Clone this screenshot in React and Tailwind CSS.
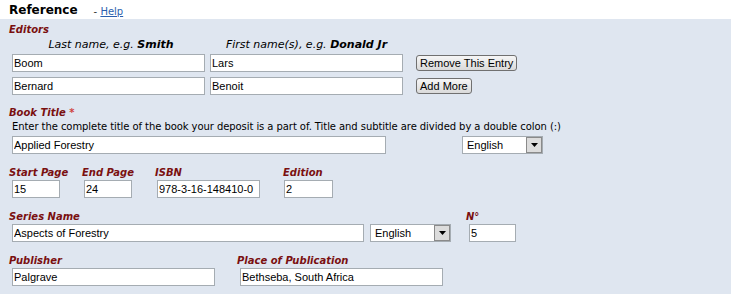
import React from "react";

const label = "font-['DejaVu_Sans',sans-serif] text-[10px] leading-[12px] font-bold italic text-[#7a1010]";
const field =
  "block h-[18px] border border-[#a5acb2] bg-white px-[1px] font-['Liberation_Sans',Arial,sans-serif] text-[11px] leading-[16px] text-black outline-none";

const Field = ({ value, w }) => (
  <input readOnly value={value} className={field} style={{ width: w }} />
);

const Select = ({ w }) => (
  <div
    className="flex h-[18px] items-stretch border border-[#a5acb2] bg-white"
    style={{ width: w }}
  >
    <span className="flex-1 pl-[4px] font-['Liberation_Sans',Arial,sans-serif] text-[11px] leading-[16px] text-black">
      English
    </span>
    <span className="flex w-[16px] items-center justify-center border border-[#8a8a8a] bg-[#dcdcdc]">
      <svg width="7" height="4" viewBox="0 0 7 4">
        <path d="M0 0h7L3.5 4z" fill="#000" />
      </svg>
    </span>
  </div>
);

const Button = ({ children }) => (
  <button className="ml-[8px] block h-[16px] rounded-[3px] border border-[#707070] bg-gradient-to-b from-[#f6f6f6] to-[#dadada] px-[3px] font-['Liberation_Sans',Arial,sans-serif] text-[11px] leading-[14px] text-black">
    {children}
  </button>
);

const App = () => {
  return (
    <div className="h-[294px] w-[731px] overflow-hidden bg-white">
      <div className="flex h-[19px] items-end pb-[1px] pl-[9px]">
        <span className="font-['DejaVu_Sans',sans-serif] text-[12px] font-bold leading-[15px] text-black">
          Reference
        </span>
        <span className="ml-[16px] font-['DejaVu_Sans',sans-serif] text-[10px] leading-[13px] text-[#333]">
          - <a className="text-[#2b5fae] underline">Help</a>
        </span>
      </div>

      <div className="h-[275px] bg-[#dfe6f0] pl-[9px] pt-[5px]">
        <p className={label}>Editors</p>
        <div className="mt-[2px] flex pl-[3px] font-['DejaVu_Sans',sans-serif] text-[11px] italic leading-[14px] text-black">
          <span className="w-[198px] text-center">
            Last name, e.g. <b>Smith</b>
          </span>
          <span className="w-[193px] text-center">
            First name(s), e.g. <b>Donald Jr</b>
          </span>
        </div>
        <div className="mt-[2px] flex items-center gap-[5px] pl-[3px]">
          <Field value="Boom" w={193} />
          <Field value="Lars" w={193} />
          <Button>Remove This Entry</Button>
        </div>
        <div className="mt-[5px] flex items-center gap-[5px] pl-[3px]">
          <Field value="Bernard" w={193} />
          <Field value="Benoit" w={193} />
          <Button>Add More</Button>
        </div>

        <p className={`${label} mt-[12px]`}>
          Book Title <span className="text-[#d04040]">*</span>
        </p>
        <p className="mt-[2px] pl-[3px] font-['DejaVu_Sans',sans-serif] text-[10px] leading-[12px] tracking-[-0.07px] text-black">
          Enter the complete title of the book your deposit is a part of. Title and subtitle are divided by a double colon (:)
        </p>
        <div className="mt-[3px] flex pl-[3px]">
          <Field value="Applied Forestry" w={374} />
          <div className="ml-[76px]">
            <Select w={81} />
          </div>
        </div>

        <div className="mt-[13px] flex">
          <div className="w-[73px]">
            <p className={label}>Start Page</p>
            <div className="mt-[1px] pl-[3px]">
              <Field value="15" w={48} />
            </div>
          </div>
          <div className="w-[73px]">
            <p className={label}>End Page</p>
            <div className="mt-[1px] pl-[2px]">
              <Field value="24" w={48} />
            </div>
          </div>
          <div className="w-[128px]">
            <p className={label}>ISBN</p>
            <div className="mt-[1px] pl-[2px]">
              <Field value="978-3-16-148410-0" w={103} />
            </div>
          </div>
          <div>
            <p className={label}>Edition</p>
            <div className="mt-[1px] pl-[1px]">
              <Field value="2" w={49} />
            </div>
          </div>
        </div>

        <div className="mt-[13px] flex">
          <div>
            <p className={label}>Series Name</p>
            <div className="mt-[1px] flex gap-[6px] pl-[3px]">
              <Field value="Aspects of Forestry" w={352} />
              <Select w={81} />
            </div>
          </div>
          <div className="ml-[15px]">
            <p className={label}>N°</p>
            <div className="mt-[1px] pl-[3px]">
              <Field value="5" w={47} />
            </div>
          </div>
        </div>

        <div className="mt-[13px] flex">
          <div className="w-[228px]">
            <p className={label}>Publisher</p>
            <div className="mt-[1px] pl-[3px]">
              <Field value="Palgrave" w={203} />
            </div>
          </div>
          <div>
            <p className={label}>Place of Publication</p>
            <div className="mt-[1px] pl-[3px]">
              <Field value="Bethseba, South Africa" w={203} />
            </div>
          </div>
        </div>
      </div>
    </div>
  );
};

export default App;
